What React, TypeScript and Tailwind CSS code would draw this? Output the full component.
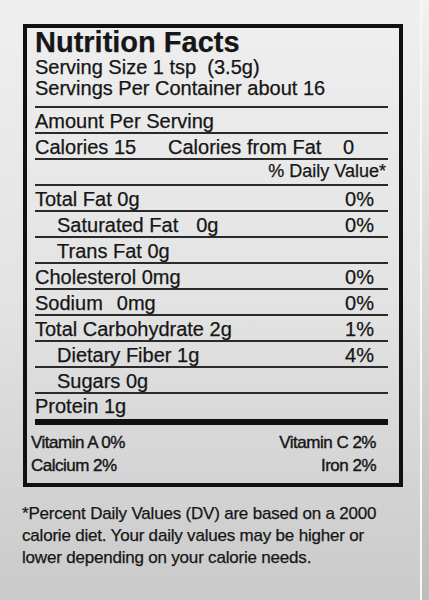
import React from "react";

type Row = {
  label: string;
  extra?: string;
  extraGap?: string;
  indent?: boolean;
  pct?: string;
};

const rows: Row[] = [
  { label: "Total Fat 0g", pct: "0%" },
  { label: "Saturated Fat", extra: "0g", extraGap: "ml-[18px]", indent: true, pct: "0%" },
  { label: "Trans Fat 0g", indent: true },
  { label: "Cholesterol 0mg", pct: "0%" },
  { label: "Sodium", extra: "0mg", extraGap: "ml-[14px]", pct: "0%" },
  { label: "Total Carbohydrate 2g", pct: "1%" },
  { label: "Dietary Fiber 1g", indent: true, pct: "4%" },
  { label: "Sugars 0g", indent: true },
];

function NutrientRow({ row }: { row: Row }) {
  return (
    <div className="flex h-[26px] justify-between border-t-2 border-[#2a2a2a] pt-[3px] pr-[14px] text-[20px] leading-[21px]">
      <div className={row.indent ? "pl-[22px]" : ""}>
        <span>{row.label}</span>
        {row.extra && <span className={row.extraGap}>{row.extra}</span>}
      </div>
      {row.pct && <span>{row.pct}</span>}
    </div>
  );
}

export default function App() {
  return (
    <div className="flex h-[600px] w-[429px] overflow-hidden bg-linear-to-b from-[#efefef] via-[#e3e3e3] to-[#cacaca] font-['Liberation_Sans',Arial,sans-serif] text-[#161616] [-webkit-text-stroke:0.25px_#161616]">
      <div className="flex w-[420px] flex-col pl-[22px] pt-[24px]">
        <div className="ml-[1px] w-[380px] border-4 border-[#111]">
          <div className="pl-[8px] pr-[11px]">
            <div className="text-[29px] font-bold leading-[29px]">Nutrition Facts</div>
            <div className="whitespace-pre pb-[7px] text-[20px] leading-[21px]">
              <div>Serving Size 1 tsp  (3.5g)</div>
              <div>Servings Per Container about 16</div>
            </div>
            <div className="h-[26px] border-t-2 border-[#2a2a2a] pt-[3px] text-[20px] leading-[21px]">
              Amount Per Serving
            </div>
            <div className="flex h-[26px] border-t-2 border-[#2a2a2a] pt-[3px] text-[20px] leading-[21px]">
              <span className="w-[133px]">Calories 15</span>
              <span className="w-[175px]">Calories from Fat</span>
              <span>0</span>
            </div>
            <div className="flex h-[26px] justify-end border-t-2 border-[#2a2a2a] pt-[1px] pr-[2px] text-[18px] leading-[21px]">
              % Daily Value*
            </div>
            {rows.map((r) => (
              <NutrientRow key={r.label} row={r} />
            ))}
            <div className="h-[27px] border-t-2 border-[#2a2a2a] pt-[2px] text-[20px] leading-[21px]">
              Protein 1g
            </div>
            <div className="h-[6px] bg-[#111]" />
          </div>
          <div className="pb-[6px] pl-[4px] pr-[23px] pt-[6px] text-[17px] leading-[23px] tracking-[-0.5px] [-webkit-text-stroke:0.4px_#161616]">
            <div className="flex justify-between">
              <span>Vitamin A 0%</span>
              <span>Vitamin C 2%</span>
            </div>
            <div className="flex justify-between">
              <span>Calcium 2%</span>
              <span>Iron 2%</span>
            </div>
          </div>
        </div>
        <p className="mt-[16px] w-[362px] text-[17px] leading-[22px] tracking-[-0.2px]">
          *Percent Daily Values (DV) are based on a 2000 calorie diet. Your daily values may be higher or lower depending on your calorie needs.
        </p>
      </div>
      <div className="flex-1 border-l-2 border-[#f7f7f7] bg-linear-to-b from-[#f2f2f2] to-[#bdbdbd]" />
    </div>
  );
}
